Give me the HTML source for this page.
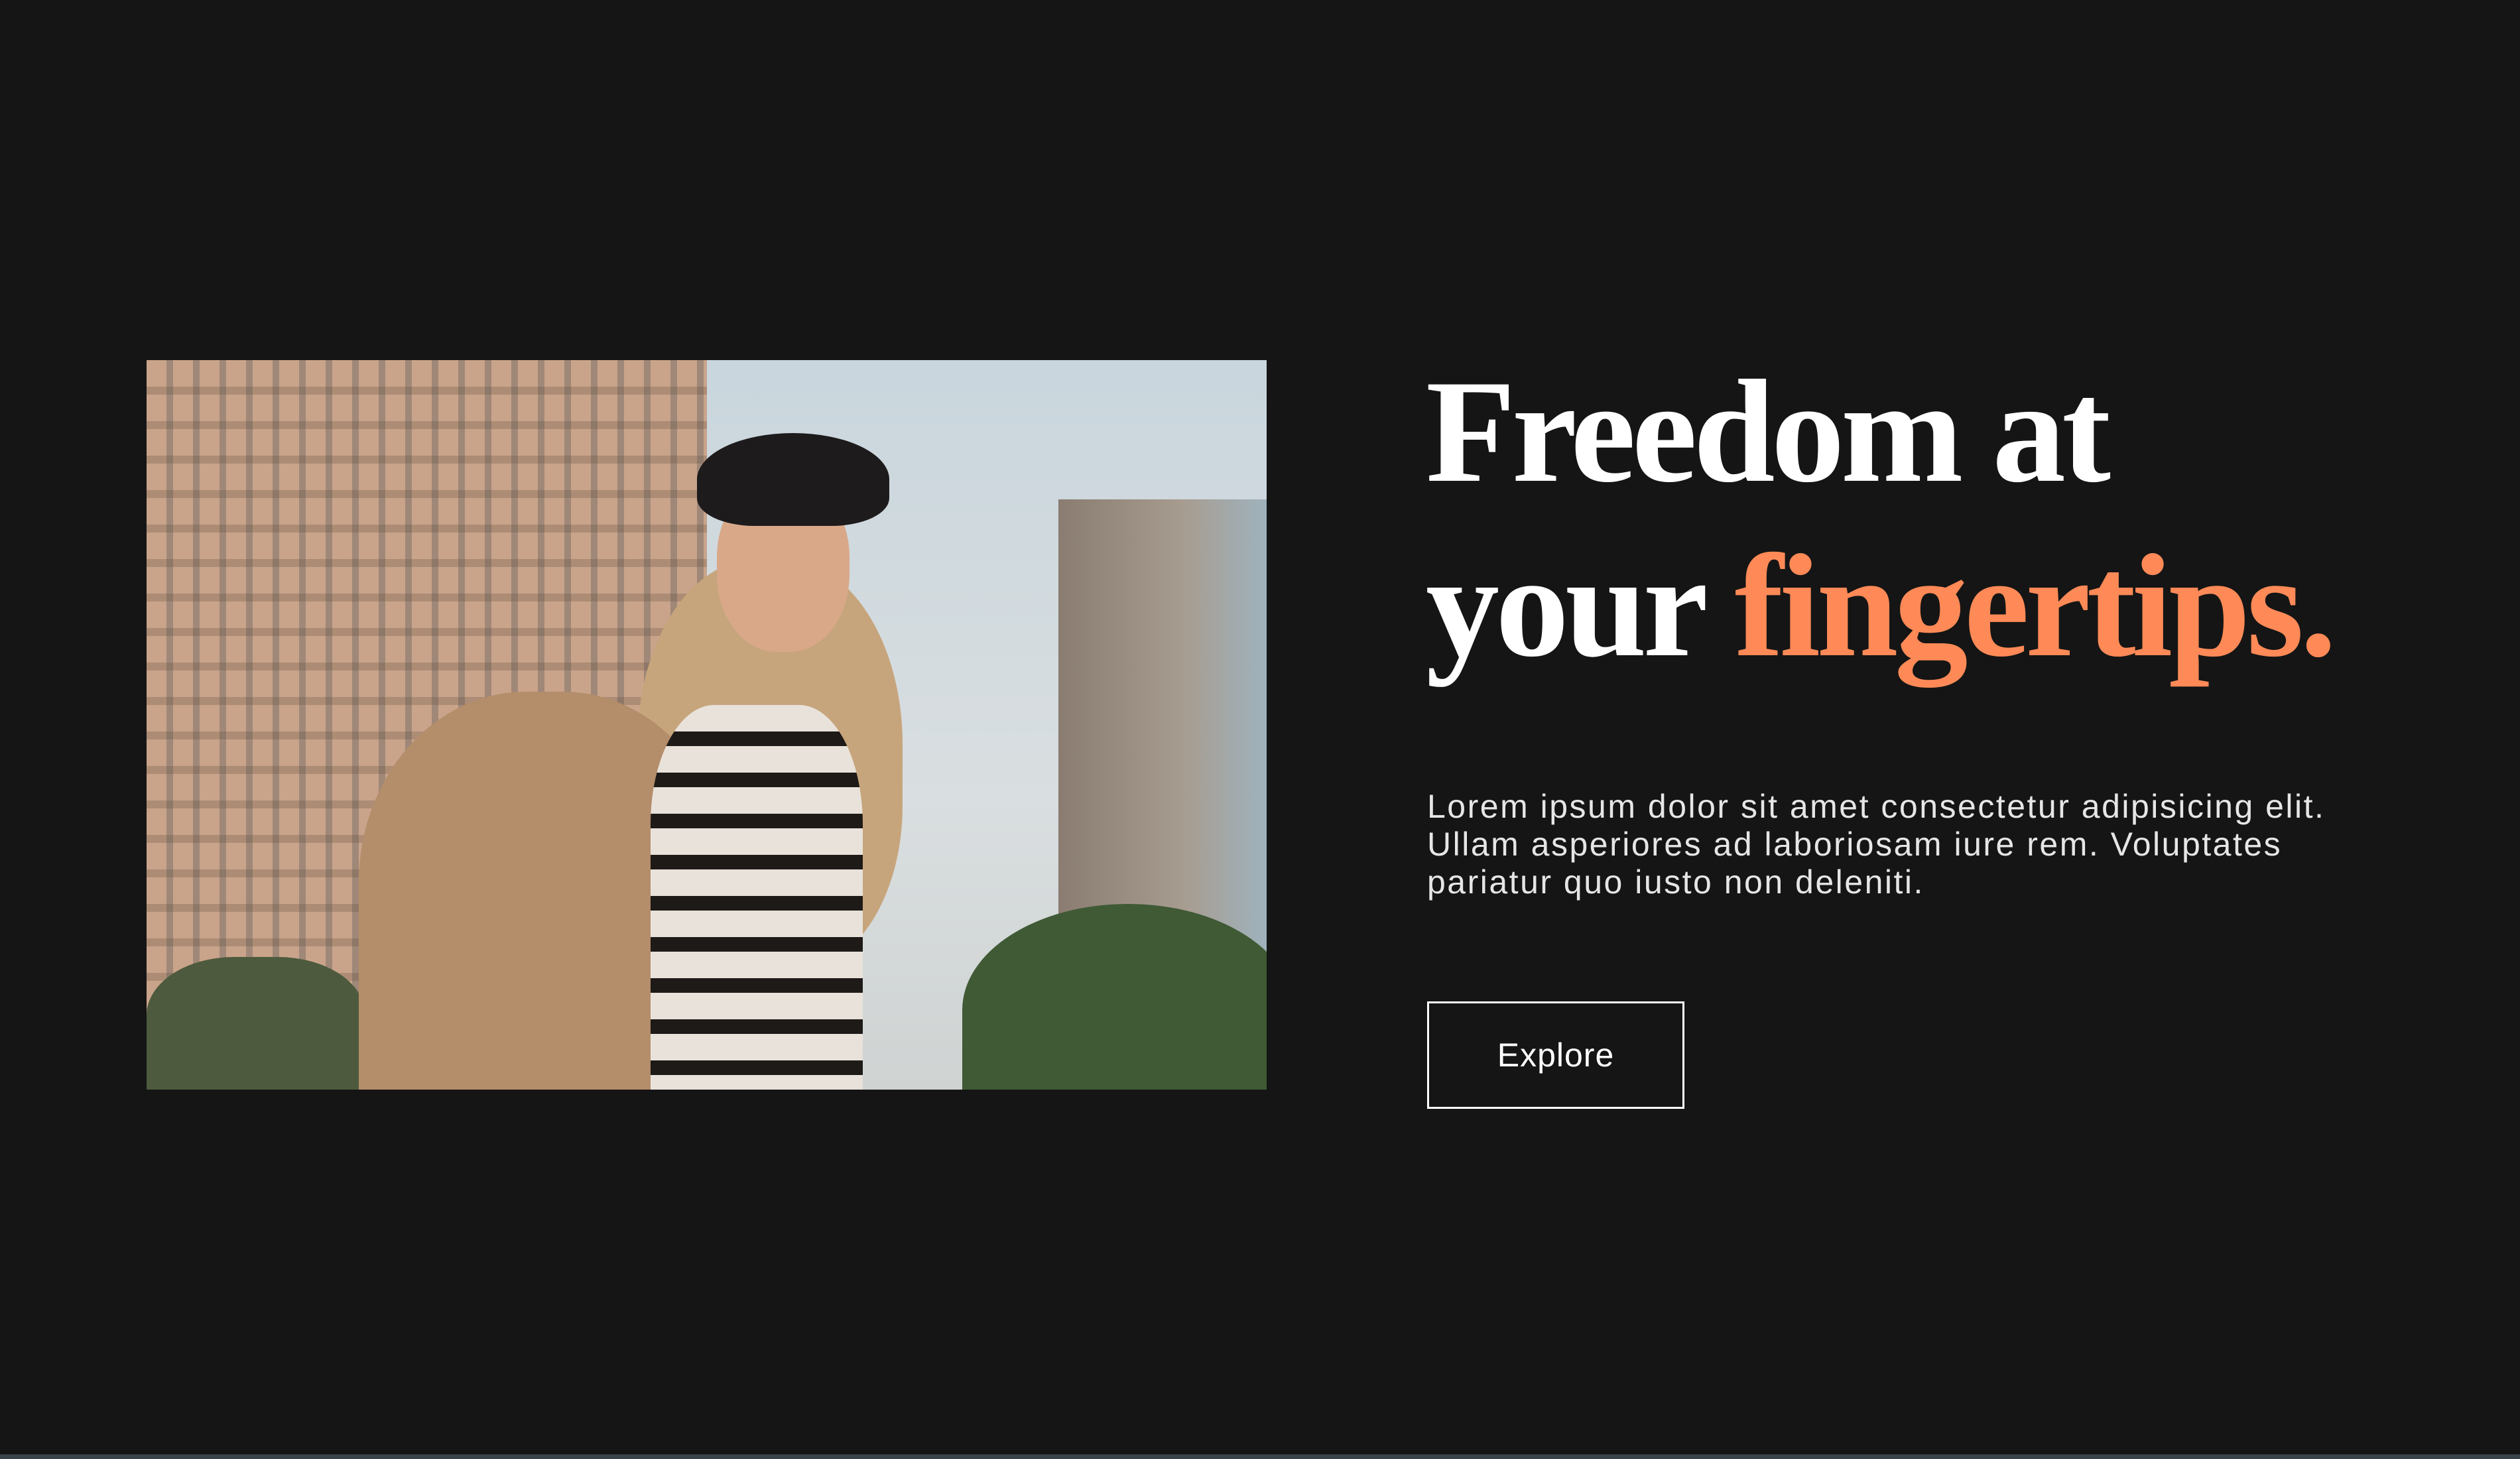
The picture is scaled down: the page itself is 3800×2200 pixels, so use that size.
<!DOCTYPE html>
<html><head><meta charset="utf-8"><style>
html,body{margin:0;padding:0;background:#151515;width:3800px;height:2200px;overflow:hidden}
.img{position:absolute;left:221px;top:543px;width:1689px;height:1100px;overflow:hidden;background:linear-gradient(180deg,#c9d6dd 0%,#d9dee0 60%,#cfd3d2 100%)}
.b1{position:absolute;left:0;top:0;width:845px;height:1100px;background:repeating-linear-gradient(90deg,#c9a48a 0 30px,#a08878 30px 40px),#b99479}
.b1b{position:absolute;left:0;top:0;width:845px;height:1100px;background:repeating-linear-gradient(180deg,rgba(0,0,0,0) 0 40px,rgba(90,70,55,.25) 40px 52px)}
.b2{position:absolute;left:1375px;top:210px;width:314px;height:690px;background:linear-gradient(90deg,#8a7c70,#a79c90 60%,#9fb2bd)}
.tree{position:absolute;left:1230px;top:820px;width:500px;height:320px;border-radius:50% 50% 0 0;background:#3f5a35}
.tree2{position:absolute;left:0;top:900px;width:330px;height:220px;background:#4d5a3d;border-radius:40% 40% 0 0}
.coat{position:absolute;left:320px;top:500px;width:560px;height:640px;background:#b48d6a;border-radius:45% 45% 0 0}
.sweater{position:absolute;left:760px;top:520px;width:320px;height:600px;background:repeating-linear-gradient(180deg,#e8e2da 0 40px,#1e1a18 40px 62px);border-radius:30% 30% 0 0}
.hair{position:absolute;left:740px;top:300px;width:400px;height:620px;background:#c7a57c;border-radius:45% 45% 40% 40%}
.face{position:absolute;left:860px;top:180px;width:200px;height:260px;background:#d9a888;border-radius:45%}
.hat{position:absolute;left:830px;top:110px;width:290px;height:140px;background:#1d1b1c;border-radius:50% 50% 30% 30%}
h1{position:absolute;left:2150px;top:520px;margin:0;font-family:"Liberation Serif",serif;font-weight:bold;font-size:222px;line-height:263px;color:#fff;letter-spacing:-6px;white-space:nowrap}
h1 span{color:#ff8a57}
p{position:absolute;left:2152px;top:1188px;margin:0;width:1600px;font-family:"Liberation Sans",sans-serif;font-size:50px;line-height:57px;color:#e6e6e6;letter-spacing:2.5px;white-space:nowrap}
.btn{position:absolute;left:2152px;top:1510px;width:382px;height:156px;border:3px solid #fff;box-sizing:content-box;color:#fff;font-family:"Liberation Sans",sans-serif;font-size:50px;line-height:156px;text-align:center;letter-spacing:1px}
.line{position:absolute;left:0;top:2193px;width:3800px;height:7px;background:#3a4448}
</style></head><body>
<div class="img">
<div class="b1"></div><div class="b1b"></div>
<div class="b2"></div>
<div class="tree"></div><div class="tree2"></div>
<div class="hair"></div>
<div class="coat"></div>
<div class="sweater"></div>
<div class="face"></div>
<div class="hat"></div>
</div>
<h1>Freedom at<br>your <span>fingertips.</span></h1>
<p>Lorem ipsum dolor sit amet consectetur adipisicing elit.<br>Ullam asperiores ad laboriosam iure rem. Voluptates<br>pariatur quo iusto non deleniti.</p>
<div class="btn">Explore</div>
<div class="line"></div>
</body></html>
